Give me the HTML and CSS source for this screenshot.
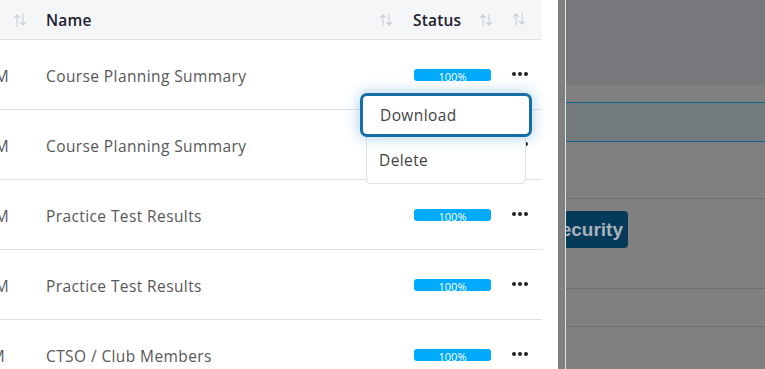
FILE: index.html
```html
<!DOCTYPE html>
<html>
<head>
<meta charset="utf-8">
<link rel="stylesheet" href="styles.css">
</head>
<body>
<div class="page">
  <div class="left">
    <div class="table">
      <div class="row head">
        <div class="cell c1"><svg class="sort" viewBox="0 0 14 14"><path d="M4 13V2M1.5 4.5L4 2l2.5 2.5M10 1v11M7.5 9.5L10 12l2.5-2.5"/></svg></div>
        <div class="cell c2"><span class="htxt">Name</span><svg class="sort" viewBox="0 0 14 14"><path d="M4 13V2M1.5 4.5L4 2l2.5 2.5M10 1v11M7.5 9.5L10 12l2.5-2.5"/></svg></div>
        <div class="cell c3"><span class="htxt">Status</span><svg class="sort" viewBox="0 0 14 14"><path d="M4 13V2M1.5 4.5L4 2l2.5 2.5M10 1v11M7.5 9.5L10 12l2.5-2.5"/></svg></div>
        <div class="cell c4"><svg class="sort" viewBox="0 0 14 14"><path d="M4 13V2M1.5 4.5L4 2l2.5 2.5M10 1v11M7.5 9.5L10 12l2.5-2.5"/></svg></div>
      </div>
      <div class="row">
        <div class="cell c1"><span class="time">PM</span></div>
        <div class="cell c2">Course Planning Summary</div>
        <div class="cell c3"><div class="bar">100%</div></div>
        <div class="cell c4"><span class="dots"><i></i><i></i><i></i></span></div>
      </div>
      <div class="row">
        <div class="cell c1"><span class="time">PM</span></div>
        <div class="cell c2">Course Planning Summary</div>
        <div class="cell c3"><div class="bar">100%</div></div>
        <div class="cell c4"><span class="dots"><i></i><i></i><i></i></span></div>
      </div>
      <div class="row">
        <div class="cell c1"><span class="time">PM</span></div>
        <div class="cell c2">Practice Test Results</div>
        <div class="cell c3"><div class="bar">100%</div></div>
        <div class="cell c4"><span class="dots"><i></i><i></i><i></i></span></div>
      </div>
      <div class="row">
        <div class="cell c1"><span class="time">PM</span></div>
        <div class="cell c2">Practice Test Results</div>
        <div class="cell c3"><div class="bar">100%</div></div>
        <div class="cell c4"><span class="dots"><i></i><i></i><i></i></span></div>
      </div>
      <div class="row">
        <div class="cell c1"><span class="time t5">PM</span></div>
        <div class="cell c2">CTSO / Club Members</div>
        <div class="cell c3"><div class="bar">100%</div></div>
        <div class="cell c4"><span class="dots"><i></i><i></i><i></i></span></div>
      </div>
    </div>
    <div class="menu">
      <div class="item active">Download</div>
      <div class="item">Delete</div>
    </div>
  </div>
  <div class="gutter"></div>
  <div class="overlay">
    <div class="ov-top"></div>
    <div class="ov-band"></div>
    <div class="ov-sel"></div>
    <div class="ov-row r1"></div>
    <div class="ov-row r2"><span class="btn">ecurity</span></div>
    <div class="ov-row r3"></div>
    <div class="ov-row r4"></div>
  </div>
</div>
</body>
</html>
```
FILE: styles.css
```css
* { box-sizing: border-box; margin: 0; padding: 0; }
html, body { width: 765px; height: 369px; overflow: hidden; background: #fff; }
body { font-family: "Open Sans", "Noto Sans", sans-serif; }
.page { display: flex; height: 369px; }
.left { position: relative; width: 558px; flex: none; background: #fff; }
.table { width: 542px; overflow: hidden; }
.row { display: grid; grid-template-columns: 46px 354px 100px 42px; height: 70px; border-bottom: 1px solid #dde2e6; align-items: center; font-size: 15.5px; letter-spacing: 0.4px; color: #575757; }
.row > .c1, .row > .c2 { padding-top: 3px; }
.row.head > .cell { padding-top: 0; }
.row.head { height: 40px; background: #f5f6f8; border-bottom: 1px solid #dee2e6; color: #1c2130; letter-spacing: 0; }
.cell { display: flex; align-items: center; height: 100%; }
.head .c1 { padding-left: 13px; }
.head .c2 { justify-content: space-between; padding-right: 7px; }
.head .c3 { padding-left: 13px; justify-content: space-between; padding-right: 7px; }
.head .c4 { padding-left: 18px; }
.htxt { font-weight: 600; font-size: 15.5px; letter-spacing: 0.2px; }
.sort { width: 14px; height: 14px; fill: none; stroke: #c9ced4; stroke-width: 1.1; stroke-linecap: round; stroke-linejoin: round; }
.time { margin-left: -15px; color: #575757; }
.t5 { margin-left: -19px; }
.c3 .bar { margin-left: 14px; width: 77px; height: 12px; border-radius: 3px; background: #00aaff; color: #fff; font-size: 11px; letter-spacing: 0; line-height: 16px; text-align: center; overflow: hidden; }
.row .c3 { padding-top: 1px; }
.row .c4 { padding-left: 12px; padding-bottom: 2px; }
.dots { display: flex; gap: 2px; }
.dots i { width: 4px; height: 4px; border-radius: 50%; background: #222; display: block; }
.menu { position: absolute; left: 366px; top: 93px; width: 160px; height: 91px; background: #fff; border: 1px solid #dfe3e8; border-radius: 4px; display: flex; flex-direction: column; }
.item { height: 46px; display: flex; align-items: center; padding-left: 12px; font-size: 15.5px; letter-spacing: 0.4px; color: #444; }
.item.active { margin: -1px -7px 0 -7px; padding-left: 17px; padding-bottom: 1px; height: 44px; border: 3px solid #176ea6; border-radius: 7px; background: #fff; box-shadow: 0 0 12px 3px rgba(60, 150, 210, 0.3); }
.gutter { width: 8px; flex: none; background: #808080; border-right: 1px solid #dfe4e8; }
.overlay { flex: 1; background: #808080; display: flex; flex-direction: column; }
.ov-top { height: 85px; flex: none; background: #77787b; }
.ov-band { height: 18px; flex: none; background: #808080; border-bottom: 1px solid #13628f; }
.ov-sel { height: 39px; flex: none; background: #737b7d; border-bottom: 1px solid #13628f; }
.ov-row { flex: none; border-bottom: 1px solid #6e6e6e; }
.r1 { height: 57px; }
.r2 { height: 90px; padding-top: 12px; }
.r3 { height: 38px; }
.r4 { height: 43px; border-bottom: none; }
.btn { display: inline-block; width: 62px; height: 37px; background: #063a5a; border-radius: 0 4px 4px 0; color: #a9b2ba; font-weight: 700; font-size: 19px; line-height: 37px; text-align: right; padding-right: 5px; font-family: "Liberation Sans", sans-serif; overflow: hidden; white-space: nowrap; direction: rtl; }
```
